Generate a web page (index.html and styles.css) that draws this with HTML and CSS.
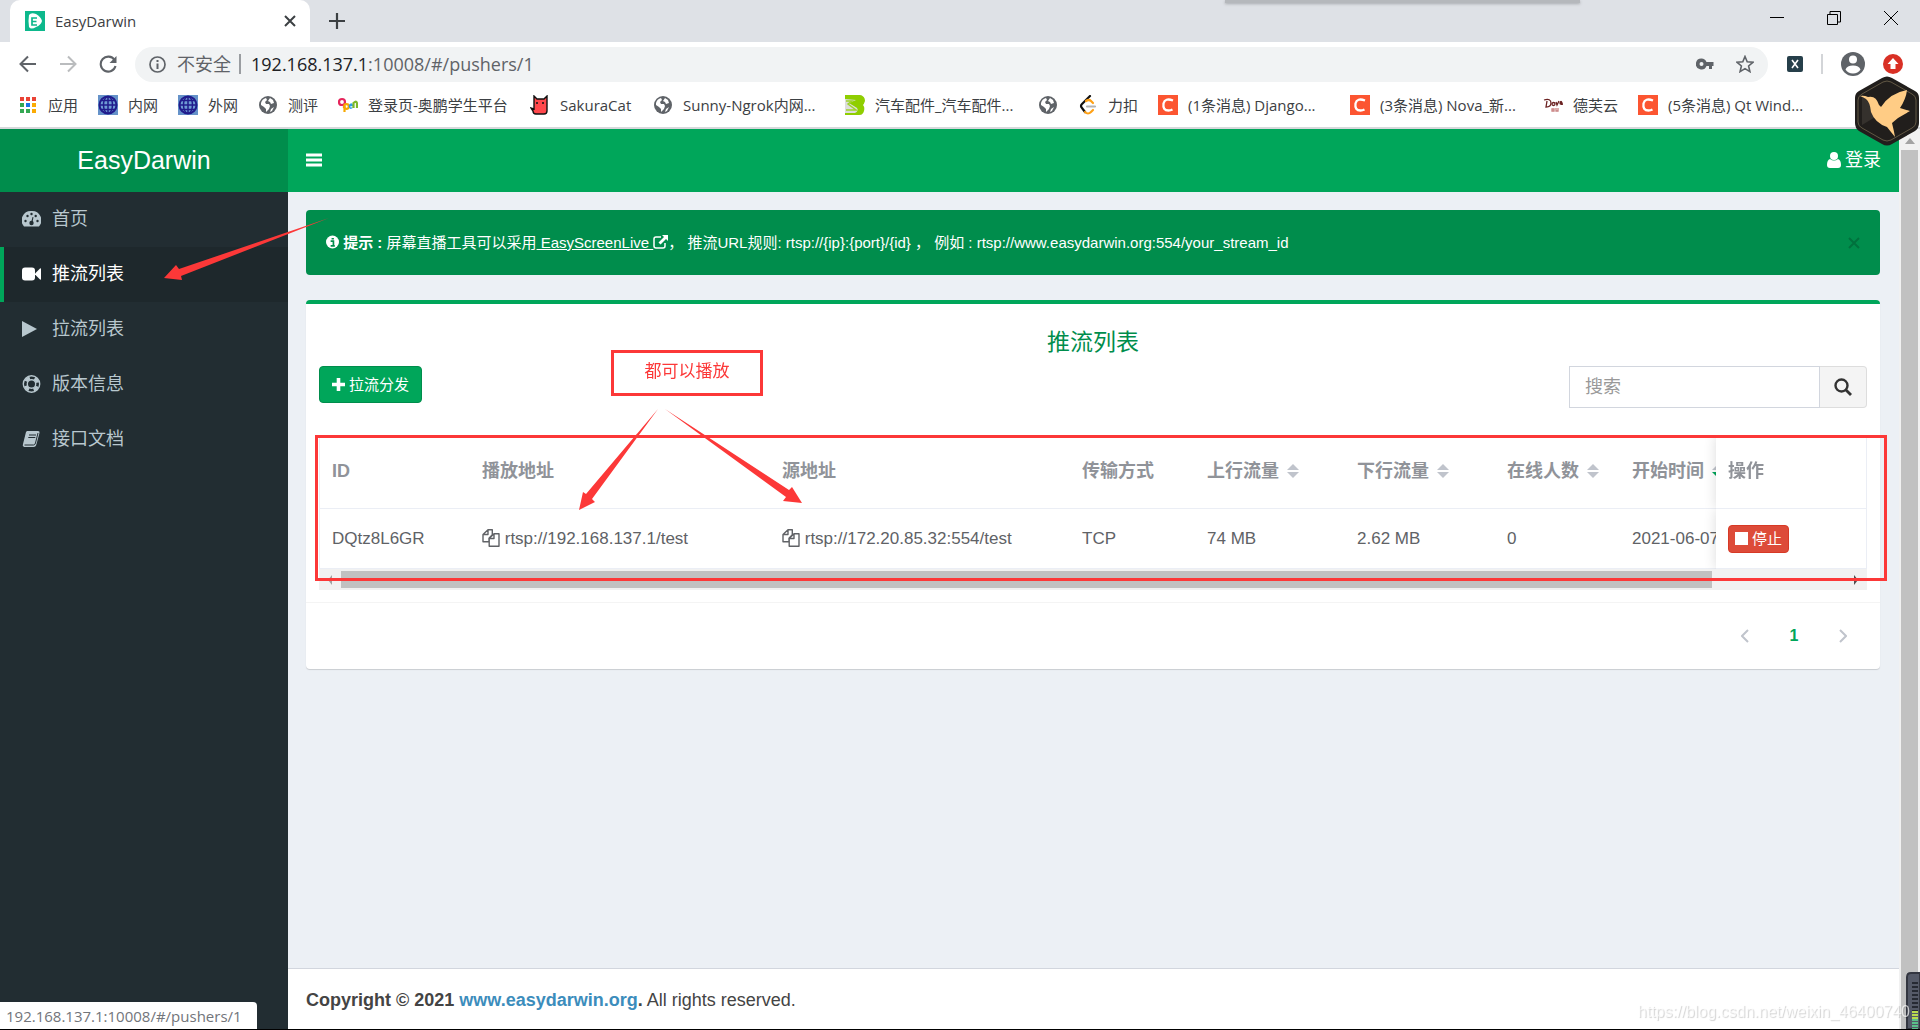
FILE: index.html
```html
<!DOCTYPE html>
<html lang="zh-CN">
<head>
<meta charset="utf-8">
<title>EasyDarwin</title>
<link rel="stylesheet" href="styles.css">
</head>
<body>
<svg class="defs" aria-hidden="true">
  <symbol id="globe" viewBox="0 0 20 20"><circle cx="10" cy="10" r="9" fill="#5f6368"/><path d="M3 8q1-4 5-5l1 2-2 2 1 2h3l1 2-1 3-3 3v-3l-2-2-3-2zM12 3l3 2 1 3-3 1-1-2-2-1zM16 12l-2 4-2 1 1-3z" fill="#fff"/></symbol>
  <symbol id="net" viewBox="0 0 20 20"><path fill="#6592c9" d="M0 0h20v20H0z"/><circle cx="10" cy="10" r="8.5" fill="#6f9bd4" stroke="#211c8c" stroke-width="2"/><path d="M10 1v18M1 10h18M3 5.5h14M3 14.500h14" stroke="#211c8c" stroke-width="1.500"/><ellipse cx="10" cy="10" rx="4.500" ry="8.500" fill="none" stroke="#211c8c" stroke-width="1.500"/></symbol>
  <symbol id="csdn" viewBox="0 0 20 20"><path fill="#fc5531" d="M0 0h20v20H0z"/><path d="M15 5.500q-8-3-9.500 3-1 7 5 7 2 0 4-1" fill="none" stroke="#fff" stroke-width="2.300"/></symbol>
  <symbol id="copy" viewBox="0 0 18 18"><path d="M6 .8h4.300v5L7 9.200v3.500H1V5.500zM6 .8v4.700H1M12 4.800h5v12.500H7.200V9.500zM12 4.800v4.700H7.200" fill="none" stroke="currentColor" stroke-width="1.400" stroke-linejoin="round"/></symbol>
  <symbol id="sort" viewBox="0 0 12 16"><path class="sort-up" d="M0 7l6-6 6 6z"/><path class="sort-down" d="M0 9l6 6 6-6z"/></symbol>
</svg>

<header class="browser">
  <div class="tabstrip">
    <div class="tab">
      <svg width="20" height="20" viewBox="0 0 20 20"><path fill="#0db88c" d="M0 0h20v20H0z"/><path d="M4 4q2-3 7-1 5 3 6 7-1 4-6 6-5 3-7 0-1-6 0-12z" fill="#fff"/><path d="M12 7H7v7h5M7 10.500h4.500" fill="none" stroke="#0db88c" stroke-width="1.700"/></svg>
      <span class="tab-title">EasyDarwin</span>
      <button class="plain" aria-label="关闭标签页"><svg width="12" height="12" viewBox="0 0 12 12"><path d="M1 1l10 10M11 1L1 11" stroke="#3c4043" stroke-width="2"/></svg></button>
    </div>
    <button class="plain newtab" aria-label="新标签页"><svg width="16" height="16" viewBox="0 0 16 16"><path d="M8 0v16M0 8h16" stroke="#3c4043" stroke-width="2.200"/></svg></button>
    <div class="window-buttons">
      <button class="plain" aria-label="最小化"><svg width="14" height="14" viewBox="0 0 14 14"><path d="M0 6.500h14" stroke="#000"/></svg></button>
      <button class="plain" aria-label="还原"><svg width="14" height="14" viewBox="0 0 14 14"><path d="M.5 3.500h10v10H.5zM3 3.500v-3h10.500V11H11" fill="none" stroke="#000"/></svg></button>
      <button class="plain" aria-label="关闭"><svg width="14" height="14" viewBox="0 0 14 14"><path d="M0 0l14 14M14 0L0 14" stroke="#000"/></svg></button>
    </div>
    <div class="drop-handle"></div>
  </div>

  <div class="toolbar">
    <div class="nav-buttons">
      <button class="plain" aria-label="后退"><svg width="18" height="18" viewBox="0 0 18 18"><path d="M17 9H2M9 1.500L1.500 9 9 16.500" fill="none" stroke="#5f6368" stroke-width="2"/></svg></button>
      <button class="plain" aria-label="前进"><svg width="18" height="18" viewBox="0 0 18 18"><path d="M1 9h15M9 1.500L16.500 9 9 16.500" fill="none" stroke="#babcbe" stroke-width="2"/></svg></button>
      <button class="plain" aria-label="刷新"><svg width="18" height="18" viewBox="0 0 18 18"><path d="M15.500 5A7.500 7.500 0 1 0 16.500 11" fill="none" stroke="#5f6368" stroke-width="2.100"/><path d="M17.500 1v7h-7z" fill="#5f6368"/></svg></button>
    </div>
    <div class="omnibox">
      <svg width="17" height="17" viewBox="0 0 17 17"><circle cx="8.500" cy="8.500" r="7.500" fill="none" stroke="#5f6368" stroke-width="1.700"/><path d="M8.500 4v2M8.500 7.500V13" stroke="#5f6368" stroke-width="2"/></svg>
      <span class="insecure">不安全</span>
      <span class="url"><b>192.168.137.1</b>:10008/#/pushers/1</span>
      <svg width="18" height="12" viewBox="0 0 18 12"><path d="M5.500.500a5.500 5.500 0 1 0 5 7.500H13v3h3V8h1.500V4H10.500A5.500 5.500 0 0 0 5.500.500zm0 3.500a2 2 0 1 1 0 4 2 2 0 0 1 0-4z" fill="#5f6368"/></svg>
      <svg width="18" height="18" viewBox="0 0 18 18"><path d="M9 1.500l2.200 5.300 5.700.5-4.300 3.700 1.300 5.600L9 13.600l-4.900 3 1.300-5.600L1.100 7.300l5.700-.5z" fill="none" stroke="#5f6368" stroke-width="1.600"/></svg>
    </div>
    <div class="extensions">
      <svg width="16" height="16" viewBox="0 0 16 16"><rect width="16" height="16" rx="2" fill="#263f4a"/><path d="M5 4l6 8M11 4l-6 8" stroke="#fff" stroke-width="1.600"/></svg>
      <span class="divider"></span>
      <svg width="24" height="24" viewBox="0 0 24 24"><circle cx="12" cy="12" r="12" fill="#5f6368"/><circle cx="12" cy="7.500" r="4" fill="#fff"/><path d="M4.500 17.500q1.500-4 7.500-4t7.500 4q-2.500 4-7.500 4t-7.500-4z" fill="#fff"/></svg>
      <svg width="20" height="20" viewBox="0 0 20 20"><circle cx="10" cy="10" r="10" fill="#d93025"/><path d="M10 4l5.500 6H12.500v5h-5v-5h-3z" fill="#fff"/></svg>
    </div>
  </div>

  <nav class="bookmarks">
    <a href="#apps"><svg width="20" height="20" viewBox="0 0 20 20"><path fill="#ea4335" d="M2 2h4v4H2zM8 2h4v4H8zM14 2h4v4h-4z"/><path fill="#34a853" d="M2 8h4v4H2zM2 14h4v4H2zM8 14h4v4H8z"/><path fill="#1a73e8" d="M8 8h4v4H8z"/><path fill="#fbab04" d="M14 8h4v4h-4zM14 14h4v4h-4z"/></svg><span>应用</span></a>
    <a href="#b1"><svg width="20" height="20"><use href="#net"/></svg><span>内网</span></a>
    <a href="#b2"><svg width="20" height="20"><use href="#net"/></svg><span>外网</span></a>
    <a href="#b3"><svg width="20" height="20"><use href="#globe"/></svg><span>测评</span></a>
    <a href="#b4"><svg width="20" height="20" viewBox="0 0 20 20" fill="none" stroke-width="2.200"><circle cx="4" cy="7" r="3" stroke="#e5255c"/><path d="M6 13V9" stroke="#e5255c"/><circle cx="8.500" cy="11.500" r="2.300" stroke="#f6a800"/><path d="M6.500 11v6" stroke="#f6a800"/><path d="M11.500 10.500h3q-1-3-3 0 0 4 3 2" stroke="#2f9de0" stroke-width="1.500"/><path d="M15.500 13V8q3.500-3 3.500 1v4" stroke="#7cb928"/></svg><span>登录页-奥鹏学生平台</span></a>
    <a href="#b5"><svg width="20" height="20" viewBox="0 0 20 20"><path d="M4 1l3 3h7l3-3v15q0 3-3 3H6q-3 0-3-3l-2-3 3 1z" fill="#ff484c" stroke="#111" stroke-width="1.400"/><path d="M7 7v2M13 7v2" stroke="#111" stroke-width="1.500"/></svg><span>SakuraCat</span></a>
    <a href="#b6"><svg width="20" height="20"><use href="#globe"/></svg><span>Sunny-Ngrok内网...</span></a>
    <a href="#b7"><svg width="20" height="20" viewBox="0 0 20 20"><path fill="#ddd" d="M0 0h17v20H0z"/><path fill="#8fce00" d="M0 0h15q5 1 5 6-1 3-2 4 2 2 1 6-1 4-5 4H0v-2h10q4-2 2-5L4 8l7-3-11-1z"/><path d="M1 6h6L3 9l8 6H1" fill="none" stroke="#9fd42a" stroke-width="1.500"/></svg><span>汽车配件_汽车配件...</span></a>
    <a href="#b8" aria-label="书签"><svg width="20" height="20"><use href="#globe"/></svg></a>
    <a href="#b9"><svg width="20" height="20" viewBox="0 0 20 20" fill="none" stroke-width="2.200" stroke-linecap="round"><path d="M12 1L4 9q-2 2 0 4l3 4" stroke="#111"/><path d="M8 6q3-2 5 0l2 2M7 17q3 3 6 0l2-2" stroke="#ffa116"/><path d="M9 11.500h8" stroke="#b3b3b3"/></svg><span>力扣</span></a>
    <a href="#b10"><svg width="20" height="20"><use href="#csdn"/></svg><span>(1条消息) Django...</span></a>
    <a href="#b11"><svg width="20" height="20"><use href="#csdn"/></svg><span>(3条消息) Nova_新...</span></a>
    <a href="#b12"><svg width="20" height="20" viewBox="0 0 20 20" fill="none" stroke="#6b2222" stroke-width="1.300"><path d="M1 5q7-2 7 3 0 4-5 4l1-6"/><circle cx="10.500" cy="9" r="1.500"/><path d="M13 7l1 3 2-4M17 8h2q-1-3-2 0 0 2 3 1"/><path d="M9 14h2v2H9zM13 13v3h2v-3" stroke="#c98383"/></svg><span>德芙云</span></a>
    <a href="#b13"><svg width="20" height="20"><use href="#csdn"/></svg><span>(5条消息) Qt Wind...</span></a>
  </nav>
</header>

<div class="viewport">
  <aside class="sidebar">
    <a class="logo" href="#/">EasyDarwin</a>
    <nav class="menu">
      <a href="#/"><svg width="19" height="18" viewBox="0 0 19 18"><path d="M9.500 1A9.300 9.300 0 0 0 2 16.500h15A9.300 9.300 0 0 0 9.500 1z" fill="currentColor"/><g fill="#222d32"><circle cx="3.500" cy="11" r="1.200"/><circle cx="5.500" cy="6" r="1.200"/><circle cx="9.500" cy="4" r="1.200"/><circle cx="13.700" cy="6" r="1.200"/><circle cx="15.500" cy="11" r="1.200"/><circle cx="9.500" cy="13" r="2.200"/><path d="M9 13l1.500-6 1 .3L10.300 13z"/></g></svg><span>首页</span></a>
      <a class="active" href="#/pushers/1"><svg width="19" height="18" viewBox="0 0 19 18" fill="currentColor"><rect y="2.500" width="13" height="13" rx="3"/><path d="M13 8.500l5-5q1-.5 1 .5v10q0 1-1 .5l-5-5z"/></svg><span>推流列表</span></a>
      <a href="#/players/1"><svg width="19" height="18" viewBox="0 0 19 18" fill="currentColor"><path d="M0 1l15 8-15 8z"/></svg><span>拉流列表</span></a>
      <a href="#/about"><svg width="19" height="18" viewBox="0 0 19 18" fill="none" stroke="currentColor"><circle cx="9.500" cy="9" r="8.200" stroke-width="1.400"/><circle cx="9.500" cy="9" r="4.200" stroke-width="1.400"/><circle cx="9.500" cy="9" r="6.200" stroke-width="3.500" stroke-dasharray="4.870 4.870" stroke-dashoffset="-2.400"/></svg><span>版本信息</span></a>
      <a href="/apidoc"><svg width="19" height="18" viewBox="0 0 19 18"><path d="M5 1h11q2 0 1.500 2l-3 11q-.5 3-3 3H2q-2-1-1-3L4 2z" fill="currentColor"/><path d="M7 5h7M6.300 7.500h7M2.500 15h9q1.500 0 2-2l2.500-10" fill="none" stroke="#222d32"/></svg><span>接口文档</span></a>
    </nav>
  </aside>

  <div class="main">
    <div class="topbar">
      <button class="plain" aria-label="切换菜单"><svg width="16" height="16" viewBox="0 0 16 16"><path d="M0 3h16M0 8h16M0 13h16" stroke="#fff" stroke-width="3"/></svg></button>
      <a href="#/login"><svg width="14" height="18" viewBox="0 0 14 18" fill="#fff"><circle cx="7" cy="5" r="4"/><path d="M3 8q-3 1-3 6 0 3 3 3h8q3 0 3-3 0-5-3-6-4 3-8 0z"/></svg>登录</a>
    </div>

    <main class="content">
      <div class="alert">
        <p><svg width="13" height="14" viewBox="0 0 14 14"><circle cx="7" cy="7" r="7" fill="#fff"/><path d="M5 6h3v5M5 11.200h4.500M6 3.500h2.500" stroke="#008d4c" stroke-width="1.800" fill="none"/></svg> <b>提示 :</b> 屏幕直播工具可以采用<a href="#download"> EasyScreenLive <svg width="15" height="14" viewBox="0 0 15 14"><path d="M8 2H3Q1 2 1 4v7q0 2 2 2h7q2 0 2-2V8" fill="none" stroke="#fff" stroke-width="1.500"/><path d="M9 0h6v6l-2-2-5.500 5.500-2-2L11 2z" fill="#fff"/></svg></a>， 推流URL规则: rtsp://{ip}:{port}/{id} ， 例如 : rtsp://www.easydarwin.org:554/your_stream_id</p>
        <button class="plain" aria-label="关闭提示"><svg width="12" height="12" viewBox="0 0 12 12"><path d="M1 1l10 10M11 1L1 11" stroke="#00713d" stroke-width="2"/></svg></button>
      </div>

      <section class="box">
        <h4>推流列表</h4>
        <div class="actions">
          <button class="add"><svg width="13" height="13" viewBox="0 0 13 13"><path d="M6.500 0v13M0 6.500h13" stroke="#fff" stroke-width="3.600"/></svg>拉流分发</button>
          <form class="search">
            <input type="text" placeholder="搜索" aria-label="搜索">
            <button type="button" aria-label="搜索"><svg width="18" height="18" viewBox="0 0 18 18"><circle cx="7.500" cy="7.500" r="6" fill="none" stroke="#333" stroke-width="2.400"/><path d="M12 12l5 5" stroke="#333" stroke-width="2.800"/></svg></button>
          </form>
        </div>

        <div class="table-wrap">
          <table>
            <colgroup><col class="w150"><col class="w300"><col class="w300"><col class="w125"><col class="w150"><col class="w150"><col class="w125"><col class="w225"><col class="w150"></colgroup>
            <thead><tr>
              <th>ID</th><th>播放地址</th><th>源地址</th><th>传输方式</th>
              <th>上行流量<svg class="sort" width="12" height="16"><use href="#sort"/></svg></th>
              <th>下行流量<svg class="sort" width="12" height="16"><use href="#sort"/></svg></th>
              <th>在线人数<svg class="sort" width="12" height="16"><use href="#sort"/></svg></th>
              <th>开始时间<svg class="sort desc" width="12" height="16"><use href="#sort"/></svg></th>
              <th class="pinned">操作</th>
            </tr></thead>
            <tbody><tr>
              <td>DQtz8L6GR</td>
              <td><svg width="18" height="18"><use href="#copy"/></svg> rtsp://192.168.137.1/test</td>
              <td><svg width="18" height="18"><use href="#copy"/></svg> rtsp://172.20.85.32:554/test</td>
              <td>TCP</td><td>74 MB</td><td>2.62 MB</td><td>0</td><td>2021-06-07</td>
              <td class="pinned"><button class="stop"><i></i>停止</button></td>
            </tr></tbody>
          </table>
        </div>
        <div class="hscroll"><span class="arrow left"></span><span class="thumb"></span><span class="arrow right"></span></div>

        <div class="pager">
          <button class="plain" aria-label="上一页"><svg width="8" height="14" viewBox="0 0 8 14"><path d="M7 1L1 7l6 6" fill="none" stroke="#c0c4cc" stroke-width="2"/></svg></button>
          <button class="plain current">1</button>
          <button class="plain" aria-label="下一页"><svg width="8" height="14" viewBox="0 0 8 14"><path d="M1 1l6 6-6 6" fill="none" stroke="#c0c4cc" stroke-width="2"/></svg></button>
        </div>
      </section>
    </main>

    <footer class="footer"><b>Copyright © 2021 <a href="#site">www.easydarwin.org</a>.</b> All rights reserved.</footer>
  </div>

  <div class="vscroll"><span class="up"></span><span class="vthumb"></span></div>
</div>

<div class="status">192.168.137.1:10008/#/pushers/1</div>

<div class="annotations">
  <div class="frame table-frame"></div>
  <div class="frame note">都可以播放</div>
  <svg class="arrows" width="1920" height="1030" fill="#fc3838"><path d="M329 218L179 269l-3-4-12 13 18 2-1-4zM658 409l-72 85-3-2-4 18 16-8-3-3zM665 409l124 81 3-3 10 16-19-2 3-4z"/></svg>
</div>
<svg class="bird" width="66" height="70" viewBox="0 0 66 70"><path d="M28 2q5-3 10 0l23 13q4 2 4 7v25q0 5-4 8L38 68q-5 3-10 0L5 55q-4-3-4-8V22q0-5 4-7z" fill="#211e1c"/><path d="M29 6q4-2 8 0l21 12q4 2 4 6v22q0 4-4 6L37 64q-4 2-8 0L8 52q-4-2-4-6V24q0-4 4-6z" fill="none" stroke="#625844"/><path d="M33 34L8 19v30z" fill="#35312d"/><path d="M6 20q4-1 8 1 8-2 11 8l2 2q9-14 26-17-1 9-7 18l10 3-12 7-6 5q2 8 3 14l-8-10q-12-4-16-15-1-10-5-13-3-2-6-3z" fill="#ffcc85"/></svg>
<svg class="meter" width="14" height="57" viewBox="0 0 14 57"><path d="M1 57V5q0-4 4-4h9v56z" fill="#555a68" stroke="#333640" stroke-width="2"/><path d="M9 10v29" stroke="#262a33" stroke-width="6" stroke-dasharray="2 2"/><path d="M9 39v8" stroke="#b9da4e" stroke-width="6" stroke-dasharray="2 1"/><path d="M9 47v10" stroke="#5ac08a" stroke-width="6" stroke-dasharray="2 1"/></svg>
<div class="watermark">https://blog.csdn.net/weixin_46400740</div>
</body>
</html>
```
FILE: styles.css
```css
* { box-sizing: border-box; }
body {
  margin: 0;
  min-height: 100vh;
  display: flex;
  flex-direction: column;
  position: relative;
  overflow: hidden;
  background: #fff;
  border-bottom: 1px solid #000;
  font: 17px/24px "Liberation Sans", "Noto Sans CJK SC", sans-serif;
  color: #333;
}
a { color: inherit; text-decoration: none; }
button, input { font: inherit; }
svg { flex: none; }
.defs { position: absolute; width: 0; height: 0; }
.plain { border: 0; background: none; padding: 0; display: flex; align-items: center; justify-content: center; }

/* Browser frame */
.browser { font: 15px/20px "Open Sans", "Noto Sans CJK SC", sans-serif; color: #3c4043; border-bottom: 2px solid #d6d8db; }
.tabstrip { height: 42px; background: #dee1e6; display: flex; align-items: center; padding-left: 10px; position: relative; }
.tab { width: 300px; height: 42px; background: #fff; border-radius: 10px 10px 0 0; display: flex; align-items: center; gap: 10px; padding: 0 14px 0 15px; }
.tab-title { flex: 1; }
.newtab { margin-left: 19px; }
.window-buttons { margin-left: auto; display: flex; gap: 43px; padding: 0 22px 6px 0; }
.drop-handle { position: absolute; top: 0; left: 1225px; width: 355px; height: 3px; background: #b5b8bc; box-shadow: 0 1px 3px #a6a9ad; }
.toolbar { height: 44px; display: flex; align-items: center; padding: 0 17px 0 19px; }
.nav-buttons { display: flex; gap: 22px; width: 116px; }
.omnibox { flex: 1; height: 35px; border-radius: 18px; background: #f1f3f4; display: flex; align-items: center; gap: 22px; padding: 0 14px; font-size: 18px; color: #5f6368; }
.insecure { border-right: 2px solid #9a9da1; padding-right: 8px; margin-left: -11px; }
.url { flex: 1; margin-left: -12px; }
.url b { font-weight: 400; color: #202124; }
.extensions { display: flex; align-items: center; gap: 18px; padding-left: 19px; }
.divider { width: 2px; height: 20px; background: #d3d5d8; }
.bookmarks { height: 41px; display: grid; grid-template-columns: 80px 80px 80px 80px 192px 123px 192px 193px 40px 80px 192px 193px 95px 192px; align-items: center; padding: 0 0 3px 18px; }
.bookmarks a { display: flex; align-items: center; gap: 10px; white-space: nowrap; }

/* Page */
.viewport { flex: 1; display: flex; background: #ecf0f5; }
.sidebar { width: 288px; background: #222d32; color: #b8c7ce; }
.logo { height: 63px; background: #008d4c; color: #fff; font-size: 25px; display: flex; align-items: center; justify-content: center; padding-bottom: 2px; }
.menu a { height: 55px; display: flex; align-items: center; gap: 11px; padding: 0 0 2px 18px; border-left: 4px solid transparent; font-size: 18px; }
.menu .active { background: #1e282c; color: #fff; border-color: #00a65a; }
.main { flex: 1; min-width: 0; display: flex; flex-direction: column; }
.topbar { height: 63px; background: #00a65a; color: #fff; display: flex; align-items: center; justify-content: space-between; padding: 0 18px 2px; font-size: 18px; }
.topbar a { display: flex; align-items: center; gap: 4px; }
.content { flex: 1; padding: 18px 19px 18px 18px; }
.alert { height: 65px; border-radius: 4px; background: #008d4c; color: #fff; font-size: 15px; display: flex; align-items: center; justify-content: space-between; padding: 0 20px; margin-bottom: 25px; }
.alert p { margin: 0; }
.alert a { text-decoration: underline; }
.alert svg { vertical-align: -1px; }
.box { background: #fff; border-top: 4px solid #00a65a; border-radius: 4px; box-shadow: 0 1px 1px rgba(0, 0, 0, .15); }
.box h4 { margin: 0; padding: 24px 0 10px; font-weight: 400; font-size: 23px; line-height: 28px; text-align: center; color: #008d4c; }
.actions { display: flex; justify-content: space-between; align-items: flex-start; padding: 0 13px; margin-bottom: 27px; }
.add { height: 37px; padding: 0 12px; border: 1px solid #008d4c; border-radius: 4px; background: #00a65a; color: #fff; font-size: 15px; display: flex; align-items: center; gap: 4px; }
.search { display: flex; height: 42px; }
.search input { width: 251px; border: 1px solid #d2d6de; padding: 0 15px; font-size: 18px; outline: 0; }
.search input::placeholder { color: #999; }
.search button { width: 47px; border: 1px solid #ddd; border-left: 0; border-radius: 0 4px 4px 0; background: #f4f4f4; padding: 0; display: flex; align-items: center; justify-content: center; }
.table-wrap { margin: 0 13px; overflow: hidden; border: 1px solid #ebeef5; border-bottom: 0; }
table { width: 1675px; table-layout: fixed; border-collapse: separate; border-spacing: 0; color: #606266; }
.w125 { width: 125px; }
.w150 { width: 150px; }
.w225 { width: 225px; }
.w300 { width: 300px; }
th, td { padding: 0 12px; text-align: left; white-space: nowrap; border-bottom: 1px solid #ebeef5; background: #fff; }
th { height: 73px; padding-bottom: 2px; color: #909399; font-size: 18px; }
td { height: 60px; }
td svg { vertical-align: -3px; }
.sort { --down: #c0c4cc; margin-left: 8px; vertical-align: -2px; }
.desc { --down: #00a65a; }
.sort-up { fill: #c0c4cc; }
.sort-down { fill: var(--down); }
.pinned { position: sticky; right: 0; box-shadow: 0 0 12px rgba(0, 0, 0, .14); clip-path: inset(0 0 0 -12px); }
.stop { height: 28px; padding: 0 6px; border: 1px solid #d73925; border-radius: 4px; background: #dd4b39; color: #fff; font-size: 15px; display: flex; align-items: center; gap: 4px; }
.stop i { width: 13px; height: 13px; background: #fff; }
.hscroll { margin: 0 13px 12px; height: 21px; background: #f1f1f1; display: flex; align-items: center; justify-content: space-between; }
.hscroll .thumb { width: 1371px; height: 17px; background: #c1c1c1; margin-right: auto; }
.arrow { width: 22px; height: 10px; }
.arrow::before { content: ""; display: block; width: 0; margin-left: 9px; border: 5px solid transparent; border-width: 5px 4px; }
.left::before { border-left: 0; border-right-color: #a3a3a3; }
.right::before { border-right: 0; border-left-color: #505050; }
.pager { height: 67px; border-top: 1px solid #f4f4f4; display: flex; align-items: center; justify-content: flex-end; padding-right: 17px; }
.pager button { width: 40px; height: 36px; margin-left: 9px; }
.pager .current { color: #00a65a; font-weight: 700; font-size: 16px; }
.footer { height: 61px; padding: 19px 18px; border-top: 1px solid #d2d6de; background: #fff; color: #444; font-size: 18px; white-space: nowrap; }
.footer a { color: #3c8dbc; }
.vscroll { width: 21px; background: #f1f1f1; display: flex; flex-direction: column; align-items: center; gap: 6px; padding-top: 9px; }
.up { border: 5px solid transparent; border-top-width: 0; border-bottom: 6px solid #a3a3a3; }
.vthumb { flex: 1; width: 17px; background: #c1c1c1; }

/* Layers over the page */
.status { position: absolute; left: 0; bottom: -1px; width: 257px; height: 28px; padding: 0 6px; border-radius: 0 4px 0 0; background: #fff; color: #72757a; font: 15px/28px "Open Sans", sans-serif; }
.annotations { position: absolute; inset: 0; pointer-events: none; overflow: hidden; }
.frame { position: absolute; border: 3px solid #fc3838; color: #fc3838; }
.table-frame { left: 315px; top: 435px; width: 1572px; height: 146px; }
.note { left: 611px; top: 350px; width: 152px; height: 46px; font-size: 17px; line-height: 38px; text-align: center; }
.arrows { position: absolute; left: 0; top: 0; }
.bird { position: absolute; right: 0; top: 76px; }
.meter { position: absolute; right: 0; bottom: 0; }
.watermark { position: absolute; right: 10px; bottom: 5px; font-size: 16px; color: rgba(255, 255, 255, .7); text-shadow: 1px 1px 1px rgba(0, 0, 0, .18); }
```
